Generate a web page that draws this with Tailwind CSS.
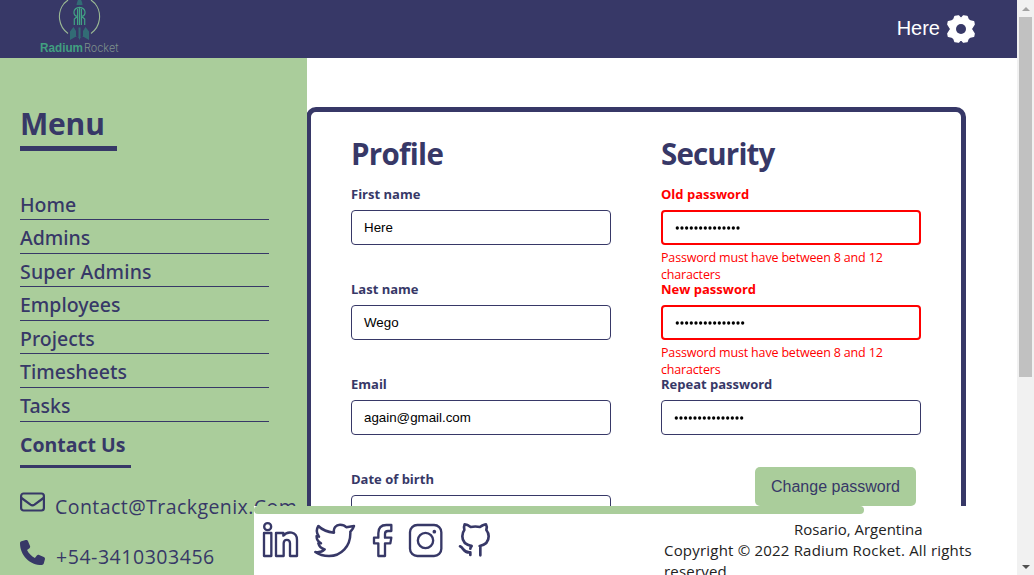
<!DOCTYPE html>
<html lang="en">
<head>
<meta charset="utf-8">
<title>Profile</title>
<script src="https://cdn.jsdelivr.net/npm/@tailwindcss/browser@4"></script>
</head>
<body class="flex h-[575px] w-[1034px] overflow-hidden bg-white font-['Open_Sans','Noto_Sans',sans-serif] text-[#373867]">
<div class="relative h-[575px] w-[1017px] overflow-hidden">
  <header class="flex h-[58px] items-center justify-between bg-[#373867] pr-[42px] pl-10">
    <svg width="80" height="58" viewBox="0 0 80 58" fill="none">
      <path d="M28 33.500A21 21 0 0 1 24 3.500L28 0M51 33.500A21 21 0 0 0 55 3.500L51 0" stroke="#9ab894" stroke-width="1.100"/>
      <path d="M36.500 5C37 2 38 0 38 0h3s1.500 2 1.500 5z" fill="#326c75"/>
      <path d="M34.300 25v-6l3-2.500c-4.500-1-5-8.500 2.200-9.200v17.700m5.200 0v-6l-3-2.500c4.500-1 5-8.500-2.200-9.200M37.600 9v16M41.400 9v16" stroke="#42a184" stroke-width="1.200"/>
      <path d="M30 40v-8.500l3.500-4.500 2.500 4v6h2.500v-9.500h2v9.500h2.500v-6l2.500-4 3.500 4.500V40l-6-3.500-2.500 1-1 2.500-1-2.500-2.500-1z" fill="#326c75"/>
      <text x="0" y="52" font-family="Liberation Sans" font-size="12" font-weight="700" fill="#419f80" textLength="43" lengthAdjust="spacingAndGlyphs">Radium</text>
      <text x="44" y="52" font-family="Inter" font-weight="300" font-size="12" fill="#7d908b" textLength="34.500" lengthAdjust="spacingAndGlyphs">Rocket</text>
    </svg>
    <div class="flex items-center gap-[7px] font-['Liberation_Sans',sans-serif] text-xl text-white">
      <span class="-mt-0.5">Here</span>
      <svg width="28" height="28" viewBox="-42 -42 84 84" fill="#fff">
        <defs><mask id="hole"><rect x="-42" y="-42" width="84" height="84" fill="#fff"/><circle r="15" fill="#000"/></mask></defs>
        <g mask="url(#hole)" stroke="#fff" stroke-width="4" stroke-linejoin="round">
          <path d="M0-31 7-39.500 18-38 22-28 28-24 38-22 39.500-14 31 0 39.500 14 38 22 28 24 22 28 18 38 7 39.500 0 31-7 39.500-18 38-22 28-28 24-38 22-39.500 14-31 0-39.500-14-38-22-28-24-22-28-18-38-7-39.500z"/>
        </g>
      </svg>
    </div>
  </header>

  <div class="flex h-[517px]">
    <aside class="z-10 w-[307px] shrink-0 bg-[#aacd9b] pl-5">
      <h1 class="mt-[45px] h-[48px] w-[97px] border-b-5 border-[#373867] text-[30px] leading-[42px] font-bold tracking-[-0.2px]">Menu</h1>
      <nav class="mt-[35px] flex w-[249px] flex-col font-['Noto_Sans',sans-serif] text-[19.500px] font-medium">
        <a class="h-[34px] border-b border-[#373867] pt-1 leading-[29px]">Home</a>
        <a class="h-[34px] border-b border-[#373867] pt-[3px] leading-[29px]">Admins</a>
        <a class="h-[33px] border-b border-[#373867] pt-[3px] leading-[29px] tracking-[0.150px]">Super Admins</a>
        <a class="h-[34px] border-b border-[#373867] pt-[3px] leading-[29px]">Employees</a>
        <a class="h-[33px] border-b border-[#373867] pt-[3px] leading-[29px]">Projects</a>
        <a class="h-[34px] border-b border-[#373867] pt-[3px] leading-[29px]">Timesheets</a>
        <a class="h-[34px] border-b border-[#373867] pt-[3px] leading-[29px]">Tasks</a>
      </nav>
      <h2 class="mt-2 h-[38px] w-[111px] border-b-3 border-[#373867] text-[19.500px] leading-[29px] font-bold whitespace-nowrap">Contact Us</h2>
      <div class="mt-[22px] flex h-[35px] text-[19.500px] leading-[34px]">
        <svg class="mt-0.5 shrink-0" width="25" height="20" viewBox="0 0 25 20" fill="none" stroke="#373867" stroke-width="2.200" stroke-linejoin="round"><rect x="1.100" y="1.500" width="22.800" height="17" rx="2.500"/><path d="m1.500 6 9 6.700q2 1.400 4 0l9-6.700"/></svg>
        <span class="ml-[10px] tracking-[0.440px] whitespace-nowrap">Contact@Trackgenix.Com</span>
      </div>
      <div class="mt-[15px] flex h-[35px] text-[19.500px] leading-[34px]">
        <svg class="shrink-0" width="25" height="25" viewBox="0 0 512 512" fill="#373867"><path d="M164.900 24.600c-7.700-18.600-28-28.500-47.400-23.200l-88 24C12.100 30.200 0 46 0 64c0 247.400 200.600 448 448 448 18 0 33.800-12.100 38.600-29.500l24-88c5.300-19.400-4.600-39.700-23.200-47.400l-96-40c-16.300-6.800-35.200-2.100-46.300 11.600L304.700 368C234.300 334.700 177.300 277.700 144 207.300L193.300 167c13.700-11.200 18.400-30 11.600-46.300l-40-96z"/></svg>
        <span class="ml-[11px] tracking-[0.540px] whitespace-nowrap">+54-3410303456</span>
      </div>
    </aside>

    <main class="mt-[49px] -ml-px flex h-[600px] w-[660px] shrink-0 gap-[50px] rounded-[10px] border-5 border-[#373867] pl-10">
      <section class="w-[260px]">
        <h2 class="mt-[21px] h-[53px] text-[29.500px] leading-[42px] font-bold tracking-[-0.7px]">Profile</h2>
        <div class="h-[95px]">
          <label class="block text-[13px] leading-[17px] font-bold">First name</label>
          <div class="mt-[7px] h-[35px] rounded border border-[#373867] px-3 font-['Liberation_Sans',sans-serif] text-[13.333px] leading-[33px] text-black">Here</div>
        </div>
        <div class="h-[95px]">
          <label class="block text-[13px] leading-[17px] font-bold">Last name</label>
          <div class="mt-[7px] h-[35px] rounded border border-[#373867] px-3 font-['Liberation_Sans',sans-serif] text-[13.333px] leading-[33px] text-black">Wego</div>
        </div>
        <div class="h-[95px]">
          <label class="block text-[13px] leading-[17px] font-bold">Email</label>
          <div class="mt-[7px] h-[35px] rounded border border-[#373867] px-3 font-['Liberation_Sans',sans-serif] text-[13.333px] leading-[33px] text-black">again@gmail.com</div>
        </div>
        <div class="h-[95px]">
          <label class="block text-[13px] leading-[17px] font-bold">Date of birth</label>
          <div class="mt-[7px] h-[35px] rounded border border-[#373867]"></div>
        </div>
      </section>
      <section class="w-[260px]">
        <h2 class="mt-[21px] h-[53px] text-[29.500px] leading-[42px] font-bold tracking-[-0.850px]">Security</h2>
        <div class="h-[95px] text-[#f00]">
          <label class="block text-[13px] leading-[17px] font-bold">Old password</label>
          <div class="mt-[7px] flex h-[35px] items-center rounded border-2 border-[#f00] px-3">
            <svg width="66" height="4" viewBox="0 0 66 4"><path d="M2.300 2H64" stroke="#000" stroke-width="3.300" stroke-linecap="round" stroke-dasharray="0 4.670"/></svg>
          </div>
          <p class="mt-1 text-[12.500px] leading-[17px] tracking-[-0.170px]">Password must have between 8 and 12<br>characters</p>
        </div>
        <div class="h-[95px] text-[#f00]">
          <label class="block text-[13px] leading-[17px] font-bold">New password</label>
          <div class="mt-[7px] flex h-[35px] items-center rounded border-2 border-[#f00] px-3">
            <svg width="71" height="4" viewBox="0 0 71 4"><path d="M2.300 2H69" stroke="#000" stroke-width="3.300" stroke-linecap="round" stroke-dasharray="0 4.670"/></svg>
          </div>
          <p class="mt-1 text-[12.500px] leading-[17px] tracking-[-0.170px]">Password must have between 8 and 12<br>characters</p>
        </div>
        <div class="h-[95px]">
          <label class="block text-[13px] leading-[17px] font-bold">Repeat password</label>
          <div class="mt-[7px] flex h-[35px] items-center rounded border border-[#373867] px-3">
            <svg width="71" height="4" viewBox="0 0 71 4"><path d="M2.300 2H69" stroke="#000" stroke-width="3.300" stroke-linecap="round" stroke-dasharray="0 4.670"/></svg>
          </div>
        </div>
        <div class="mt-[-4px] ml-[94px] h-[39px] w-[161px] rounded-[5px] bg-[#aacd9b] text-center font-['Liberation_Sans',sans-serif] text-base leading-[39px]">Change password</div>
      </section>
    </main>
  </div>

  <footer class="absolute top-[506px] left-[254px] z-20 h-[69px] w-[763px] overflow-hidden bg-white">
    <div class="h-2 w-[610px] rounded-full bg-[#aacd9b]"></div>
    <div class="flex justify-between pr-[35px]">
      <div class="flex pt-[7px] pl-2">
        <svg width="38" height="38" viewBox="36 78 114 114" fill="none" stroke="#373867" stroke-width="7" stroke-linejoin="round"><circle cx="53" cy="95" r="10.500"/><path d="M42 114h22v69H42zM78 114h22v8c7-9 18-10 25-9 11 2 16 10 16 22v48h-21v-38c0-14-19-14-19 0v38H78z"/></svg>
        <svg class="ml-3.5" width="42" height="38" viewBox="191 78 126 114" fill="none" stroke="#373867" stroke-width="7.500" stroke-linejoin="round"><path d="M204 93C216 105 231 111 251 113C248 99 257 89 269 89C278 89 284 92 288 97L311 93C309 101 304 105 300 110C302 154 272 183 236 183C219 183 206 179 195 171C207 173 217 169 223 163C212 160 206 154 204 145L212 145C202 139 198 132 199 123L206 125C198 115 198 103 204 93Z"/></svg>
        <svg class="ml-4" width="22" height="38" viewBox="365 78 66 114" fill="none" stroke="#373867" stroke-width="7" stroke-linejoin="round"><path d="M384 183v-38h-13v-17h13v-13c0-16 8-25 24-25h15v18h-10c-7 0-9 3-9 9v11h19l-3 17h-16v38z"/></svg>
        <svg class="ml-3.5" width="36" height="38" viewBox="473 78 108 114" fill="none" stroke="#373867" stroke-width="7"><rect x="479" y="90" width="94" height="93" rx="22"/><circle cx="525.500" cy="136.500" r="23"/><circle cx="552" cy="110" r="5.500" fill="#373867" stroke="none"/></svg>
        <svg class="ml-3.5" width="34" height="38" viewBox="624 78 102 114" fill="none" stroke="#373867" stroke-width="8" stroke-linecap="round" stroke-linejoin="round"><path d="M661 180v-8c-20 3-20-14-31-18M665 153c-17-3-28-13-28-29 0-8 2-14 6-19-2-6-1-12 1-17 7 0 13 4 18 8 9-2 19-2 28 0 6-4 12-8 18-8 3 5 3 11 1 17 5 6 7 12 7 19 0 16-10 26-27 29M665 153q-4 4-4 8M691 153v28"/></svg>
      </div>
      <div class="w-[318px] pt-[5px] text-[15px] leading-[21px] text-[#222]">
        <p class="pl-[130px]">Rosario, Argentina</p>
        <p class="tracking-[0.200px]">Copyright © 2022 Radium Rocket. All rights<br>reserved.</p>
      </div>
    </div>
  </footer>
</div>
<div class="flex w-[17px] flex-col items-center bg-[#f1f1f1] pt-[7px] pb-1.5">
  <svg width="8" height="4"><path d="M0 4 4 0 8 4z" fill="#a3a3a3"/></svg>
  <div class="mt-1.5 h-[360px] w-[13px] bg-[#c1c1c1]"></div>
  <svg class="mt-auto" width="8" height="4"><path d="M0 0 4 4 8 0z" fill="#505050"/></svg>
</div>
</body>
</html>
